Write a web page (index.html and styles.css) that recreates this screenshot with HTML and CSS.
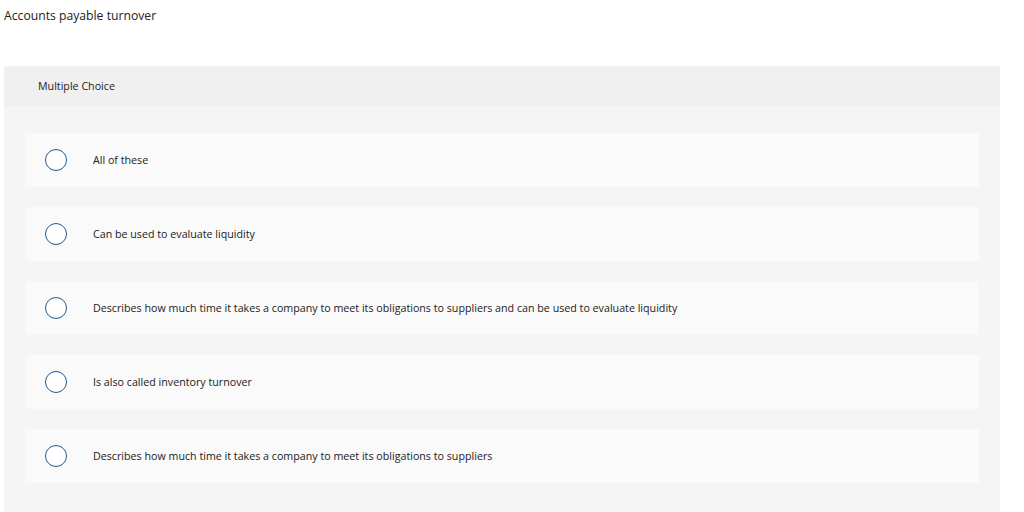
FILE: index.html
```html
<!DOCTYPE html>
<html lang="en">
  <head>
    <meta charset="UTF-8" />
    <title>Accounts payable turnover</title>
    <link rel="stylesheet" href="styles.css">
  </head>
  <body>
    <p class="question">Accounts payable turnover</p>
    <div class="panel">
      <div class="panel-header">Multiple Choice</div>
      <div class="choices">
        <label class="choice"><span class="radio"></span><span class="choice-text">All of these</span></label>
        <label class="choice"><span class="radio"></span><span class="choice-text">Can be used to evaluate liquidity</span></label>
        <label class="choice"><span class="radio"></span><span class="choice-text">Describes how much time it takes a company to meet its obligations to suppliers and can be used to evaluate liquidity</span></label>
        <label class="choice"><span class="radio"></span><span class="choice-text">Is also called inventory turnover</span></label>
        <label class="choice"><span class="radio"></span><span class="choice-text">Describes how much time it takes a company to meet its obligations to suppliers</span></label>
      </div>
    </div>
  </body>
</html>
```

FILE: styles.css
```css
body,
html {
  margin: 0;
  padding: 0;
  background-color: #fff;
  font-family: "Open Sans", "Liberation Sans", sans-serif;
  color: #222;
}

body {
  padding: 0 24px 0 4px;
}

.question {
  margin: 0;
  padding-top: 8px;
  height: 58px;
  font-size: 12.2px;
  line-height: 16px;
}

.panel {
  background-color: #f5f5f5;
  border-radius: 3px 3px 0 0;
  padding-bottom: 30px;
}

.panel-header {
  background-color: #f0f0f0;
  border-radius: 3px 3px 0 0;
  height: 40px;
  line-height: 40px;
  padding-left: 34px;
  font-size: 10.7px;
}

.choices {
  display: flex;
  flex-direction: column;
  gap: 20px;
  padding: 27px 21px 0 21px;
}

.choice {
  display: flex;
  align-items: center;
  height: 54px;
  background-color: #fafafa;
  border-radius: 2px;
  font-size: 10.7px;
}

.radio {
  width: 20px;
  height: 20px;
  border: 1.5px solid #1d5c95;
  border-radius: 50%;
  margin-left: 20px;
  margin-right: 26px;
  background-color: #fff;
  flex-shrink: 0;
}
```
